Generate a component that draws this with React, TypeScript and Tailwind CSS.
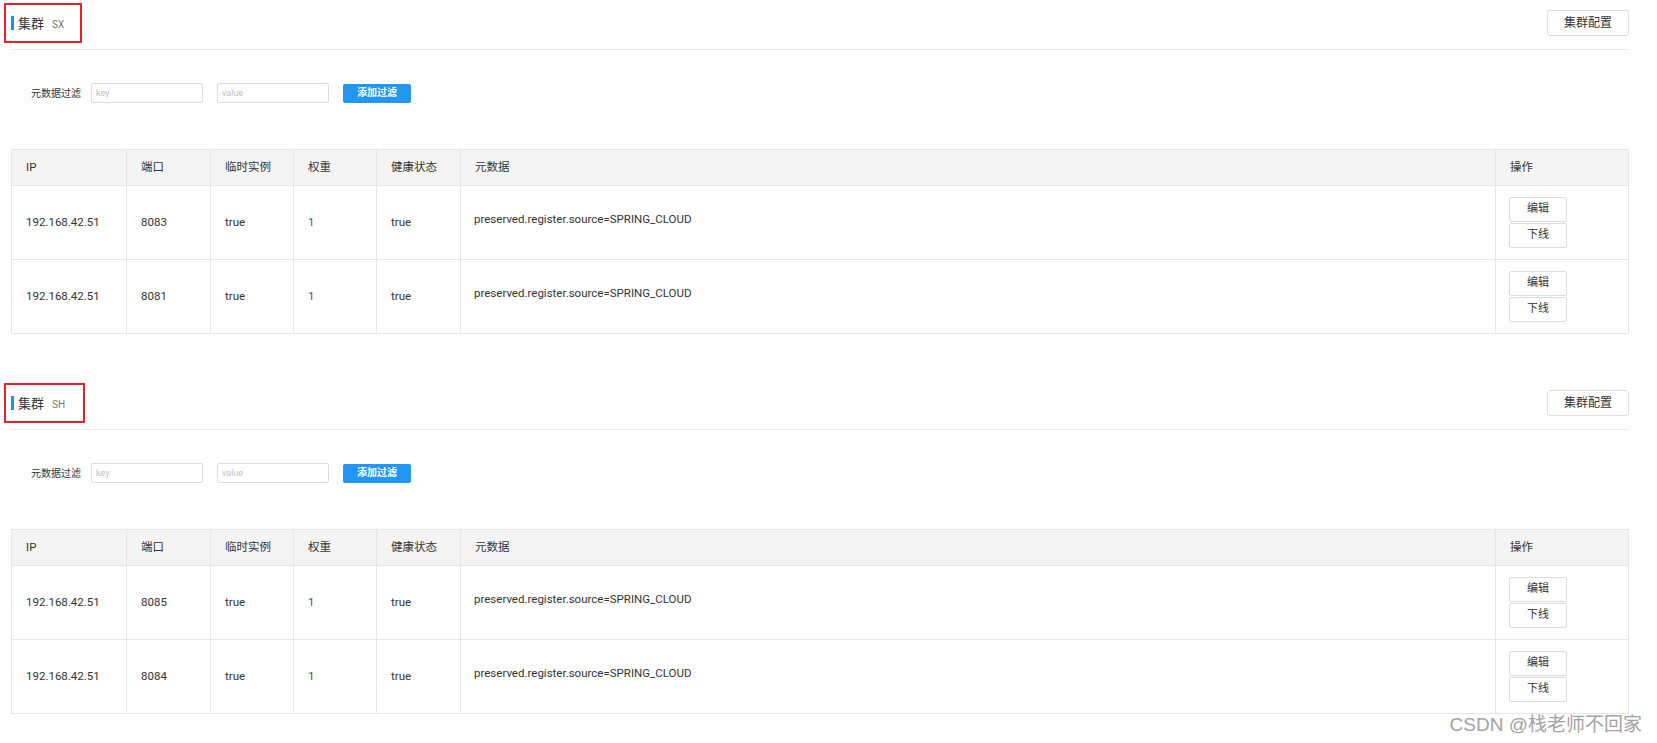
import React from "react";

type Row = { ip: string; port: string };

const sections: { name: string; rows: Row[]; box: string }[] = [
  {
    name: "SX",
    rows: [
      { ip: "192.168.42.51", port: "8083" },
      { ip: "192.168.42.51", port: "8081" },
    ],
    box: "w-[78px]",
  },
  {
    name: "SH",
    rows: [
      { ip: "192.168.42.51", port: "8085" },
      { ip: "192.168.42.51", port: "8084" },
    ],
    box: "w-[81px]",
  },
];

const headers = ["IP", "端口", "临时实例", "权重", "健康状态", "元数据", "操作"];
const widths = ["w-[115px]", "w-[84px]", "w-[83px]", "w-[83px]", "w-[84px]", "w-[1035px]", "w-[133px]"];

function Section({ name, rows, box }: { name: string; rows: Row[]; box: string }) {
  return (
    <div>
      <div className="flex items-center justify-between pt-[10px] pb-[13px] border-b border-[#e8e8e8]">
        <div className="relative flex items-center h-[26px]">
          <span className="block w-[3px] h-[14px] bg-[#1e90f0]" />
          <span className="ml-[4px] text-[13px] text-[#333] leading-none">集群</span>
          <span className="ml-[8px] text-[10px] text-[#777] leading-none mt-[3px]">{name}</span>
          <span className={`absolute left-[-7px] top-[-7px] h-[40px] ${box} border-2 border-[#e8202a] pointer-events-none`} />
        </div>
        <button className="w-[82px] h-[26px] border border-[#dcdcdc] rounded-[3px] text-[12px] text-[#333] bg-white">
          集群配置
        </button>
      </div>

      <div className="mt-[33px] flex items-center pl-[20px] h-[20px]">
        <span className="text-[10px] text-[#333] w-[60px]">元数据过滤</span>
        <input
          placeholder="key"
          className="w-[112px] h-[20px] border border-[#dcdcdc] rounded-[2px] px-[4px] text-[9px] placeholder:text-[#c0c0c0] outline-none"
        />
        <input
          placeholder="value"
          className="ml-[14px] w-[112px] h-[20px] border border-[#dcdcdc] rounded-[2px] px-[4px] text-[9px] placeholder:text-[#c0c0c0] outline-none"
        />
        <button className="ml-[14px] w-[68px] h-[19px] bg-[#2196f3] rounded-[2px] text-white text-[10px] font-semibold leading-none">
          添加过滤
        </button>
      </div>

      <table className="mt-[46px] w-full table-fixed border-collapse text-[11.5px] text-[#333]">
        <colgroup>
          {widths.map((w, i) => (
            <col key={i} className={w} />
          ))}
        </colgroup>
        <thead>
          <tr className="h-[36px] bg-[#f4f4f4]">
            {headers.map((h) => (
              <th key={h} className="border border-[#e6e6e6] px-[14px] text-left font-normal text-[11.5px]">
                {h}
              </th>
            ))}
          </tr>
        </thead>
        <tbody>
          {rows.map((r) => (
            <tr key={r.port} className="h-[74px]">
              <td className="border border-[#e6e6e6] px-[14px]">{r.ip}</td>
              <td className="border border-[#e6e6e6] px-[14px]">{r.port}</td>
              <td className="border border-[#e6e6e6] px-[14px]">true</td>
              <td className="border border-[#e6e6e6] px-[14px] text-[#555]">1</td>
              <td className="border border-[#e6e6e6] px-[14px]">true</td>
              <td className="border border-[#e6e6e6] px-[13px] pb-[6px]">preserved.register.source=SPRING_CLOUD</td>
              <td className="border border-[#e6e6e6] pl-[13px]">
                <div className="flex flex-col gap-[1px] w-[58px]">
                  <button className="h-[25px] border border-[#dcdcdc] rounded-[2px] bg-white text-[11px] text-[#333]">编辑</button>
                  <button className="h-[25px] border border-[#dcdcdc] rounded-[2px] bg-white text-[11px] text-[#333]">下线</button>
                </div>
              </td>
            </tr>
          ))}
        </tbody>
      </table>
    </div>
  );
}

export default function App() {
  return (
    <div
      className="relative w-[1657px] h-[743px] overflow-hidden bg-white pl-[11px] pr-[28px]"
      style={{ fontFamily: 'Roboto, "Noto Sans CJK SC", sans-serif' }}
    >
      <div className="flex flex-col gap-[46px]">
        {sections.map((s) => (
          <Section key={s.name} name={s.name} rows={s.rows} box={s.box} />
        ))}
      </div>
      <div
        className="absolute right-[15px] top-[714px] text-[19px] leading-[22px] text-[#a3a3a3]"
        style={{ fontFamily: '"Liberation Sans", "Noto Sans CJK SC", sans-serif' }}
      >
        CSDN @栈老师不回家
      </div>
    </div>
  );
}
